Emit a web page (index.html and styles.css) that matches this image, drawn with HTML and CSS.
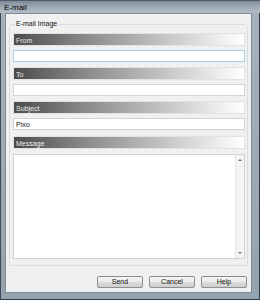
FILE: index.html
```html
<!DOCTYPE html>
<html>
<head>
<meta charset="utf-8">
<link rel="stylesheet" href="styles.css">
</head>
<body>
<div class="window">
  <div class="titlebar">E-mail</div>
  <div class="frame">
    <div class="client">
      <fieldset class="group">
        <legend class="legend">E-mail Image</legend>
        <div class="bar">From</div>
        <div class="input focused"></div>
        <div class="bar gap5">To</div>
        <div class="input gap5"></div>
        <div class="bar gap5">Subject</div>
        <div class="input">Pixo</div>
        <div class="bar gap6">Message</div>
        <div class="textarea gap5">
          <div class="text"></div>
          <div class="scroll">
            <span class="arrow up"></span>
            <span class="arrow down"></span>
          </div>
        </div>
      </fieldset>
      <div class="buttons">
        <div class="btn">Send</div>
        <div class="btn">Cancel</div>
        <div class="btn">Help</div>
      </div>
    </div>
  </div>
</div>
</body>
</html>
```

FILE: styles.css
```css
* { box-sizing: border-box; }
html, body { margin: 0; padding: 0; }
body {
  width: 260px;
  height: 300px;
  overflow: hidden;
  font-family: "Liberation Sans", Arial, sans-serif;
  font-size: 7px;
  color: #111;
}
.window {
  width: 260px;
  height: 300px;
  background: linear-gradient(to right, #8c9aa6 0%, #a7b2bc 40%, #98a6b2 80%, #5e6f7e 100%);
  display: flex;
  flex-direction: column;
}
.titlebar {
  height: 13px;
  padding: 3px 0 0 4px;
  font-size: 8px;
  line-height: 8px;
  color: #000;
  background: linear-gradient(to bottom, #7f8c98, #a3aeb9 60%, #b2bcc6);
  border-top: 1px solid #4e5a66;
}
.frame {
  flex: 1;
  padding: 0 7px 6px 4px;
  border-left: 1px solid #3c4a58;
  border-right: 1px solid #2e3b48;
  border-bottom: 1px solid #2e3b48;
  background: linear-gradient(to bottom, #a6b1bb, #95a3af);
}
.client {
  height: 100%;
  background: #f0f0f0;
  border: 1px solid #7e8c98;
  display: flex;
  flex-direction: column;
  padding: 6px 3px 0 3px;
}
.group {
  margin: 0;
  padding: 5px 2px 0 3px;
  border: 1px solid #d5dfe5;
  border-radius: 3px;
  height: 246px;
  display: flex;
  flex-direction: column;
}
.legend {
  padding: 0 1px;
  margin-left: 2px;
  font-size: 7px;
  line-height: 8px;
  color: #111;
}
.bar {
  height: 13px;
  padding: 3px 0 0 2px;
  line-height: 7px;
  color: #ececec;
  background: linear-gradient(to right, #4c4c4c 0%, #888888 30%, #c4c4c4 65%, #ffffff 100%);
  border: 1px solid #e2e2e2;
}
.gap5 { margin-top: 5px; }
.gap6 { margin-top: 6px; }
.input {
  margin-top: 4px;
  height: 12px;
  background: #fff;
  border: 1px solid #d2d2d2;
  padding: 2px 0 0 2px;
  line-height: 7px;
}
.input.focused { border-color: #a9cde6; }
.textarea {
  height: 105px;
  background: #fff;
  border: 1px solid #d2d2d2;
  display: flex;
}
.text { flex: 1; }
.scroll {
  width: 9px;
  background: #f4f4f4;
  border-left: 1px solid #e4e4e4;
  display: flex;
  flex-direction: column;
  justify-content: space-between;
  align-items: center;
  padding: 4px 0 4px;
}
.arrow {
  width: 0;
  height: 0;
  border-left: 2px solid transparent;
  border-right: 2px solid transparent;
}
.arrow.up { border-bottom: 2px solid #777; }
.arrow.down { border-top: 2px solid #777; }
.buttons {
  display: flex;
  justify-content: flex-end;
  gap: 6px;
  margin-top: 10px;
  padding-right: 1px;
}
.btn {
  width: 46px;
  height: 12px;
  border: 1px solid #8d8d8d;
  border-radius: 2px;
  background: linear-gradient(to bottom, #f4f4f4 0%, #ebebeb 50%, #dcdcdc 51%, #cfcfcf 100%);
  text-align: center;
  line-height: 10px;
  font-size: 7px;
  color: #111;
}
```
